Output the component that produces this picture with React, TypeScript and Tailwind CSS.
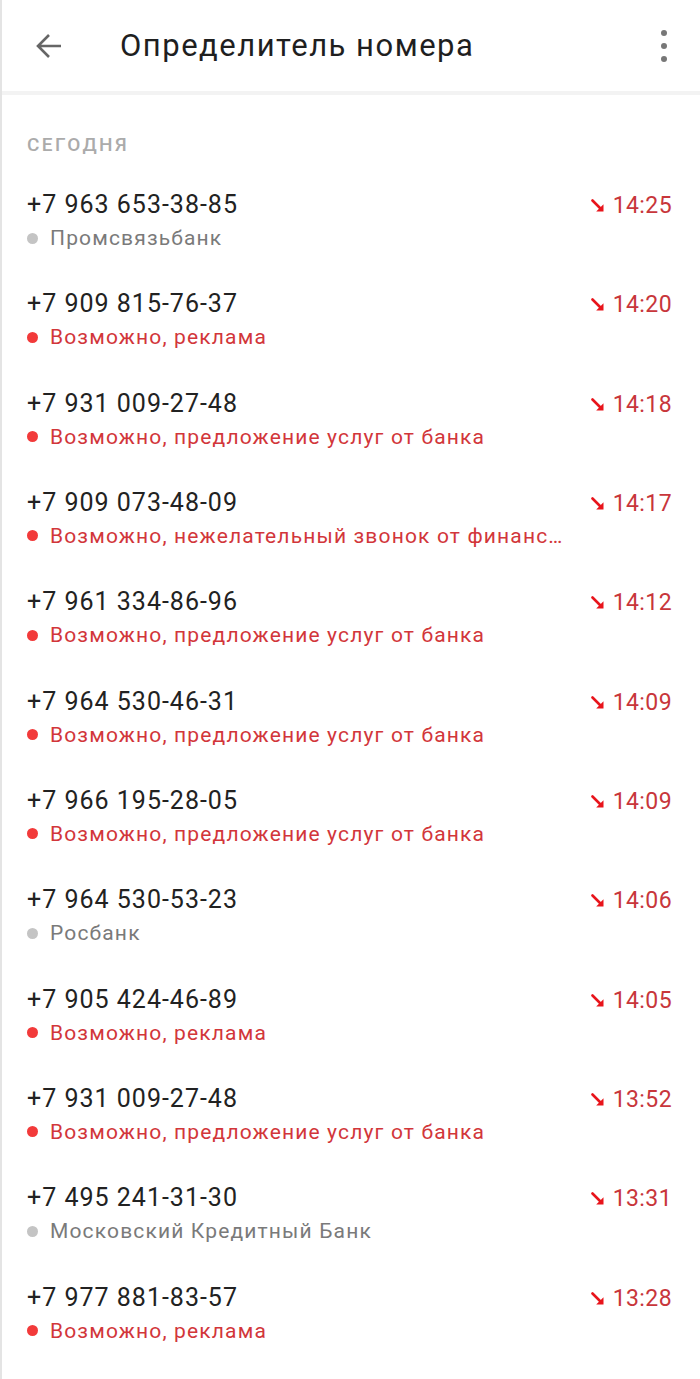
import React from "react";

type Call = {
  phone: string;
  label: string;
  spam: boolean;
  time: string;
};

const CALLS: Call[] = [
  { phone: "+7 963 653-38-85", label: "Промсвязьбанк", spam: false, time: "14:25" },
  { phone: "+7 909 815-76-37", label: "Возможно, реклама", spam: true, time: "14:20" },
  { phone: "+7 931 009-27-48", label: "Возможно, предложение услуг от банка", spam: true, time: "14:18" },
  { phone: "+7 909 073-48-09", label: "Возможно, нежелательный звонок от финансовой организации", spam: true, time: "14:17" },
  { phone: "+7 961 334-86-96", label: "Возможно, предложение услуг от банка", spam: true, time: "14:12" },
  { phone: "+7 964 530-46-31", label: "Возможно, предложение услуг от банка", spam: true, time: "14:09" },
  { phone: "+7 966 195-28-05", label: "Возможно, предложение услуг от банка", spam: true, time: "14:09" },
  { phone: "+7 964 530-53-23", label: "Росбанк", spam: false, time: "14:06" },
  { phone: "+7 905 424-46-89", label: "Возможно, реклама", spam: true, time: "14:05" },
  { phone: "+7 931 009-27-48", label: "Возможно, предложение услуг от банка", spam: true, time: "13:52" },
  { phone: "+7 495 241-31-30", label: "Московский Кредитный Банк", spam: false, time: "13:31" },
  { phone: "+7 977 881-83-57", label: "Возможно, реклама", spam: true, time: "13:28" },
];

const IncomingArrow = () => (
  <svg className="w-[14px] h-[14px] flex-shrink-0" viewBox="0 0 14 14">
    <path d="M1.5 1.5L9 9" stroke="#e8141b" strokeWidth={2.6} strokeLinecap="round" />
    <path d="M12.5 5.2V12.5H5.2z" fill="#e8141b" />
  </svg>
);

export default function App() {
  return (
    <div className="w-[700px] min-h-[1379px] bg-white border-l-2 border-[#e4e4e4] font-['Roboto',sans-serif]">
      {/* Header */}
      <div className="h-[91px] flex items-center">
        <button type="button" className="ml-[31px] w-[31px] h-[31px] flex items-center justify-center text-[#666]" aria-label="Назад">
          <svg className="w-[30px] h-[30px]" viewBox="0 0 30 30" fill="none" stroke="currentColor">
            <path d="M27 15H4M15 4L4 15l11 11" strokeWidth={2.6} strokeLinecap="butt" strokeLinejoin="miter" />
          </svg>
        </button>
        <h1 className="ml-[56px] text-[31px] leading-none text-[#1f1f1f] tracking-[1.5px]">Определитель номера</h1>
        <div className="ml-auto mr-[33px] flex flex-col gap-[7px] items-center">
          <span className="w-[6px] h-[6px] rounded-full bg-[#777]" />
          <span className="w-[6px] h-[6px] rounded-full bg-[#777]" />
          <span className="w-[6px] h-[6px] rounded-full bg-[#777]" />
        </div>
      </div>
      <div className="h-[4px] bg-[#f3f3f3]" />

      {/* Section */}
      <div className="pt-[38px] pb-[13px] pl-[25px]">
        <p className="text-[19px] leading-[24px] font-medium tracking-[2.4px] text-[#ababab]">СЕГОДНЯ</p>
      </div>

      <div>
        {CALLS.map((c, idx) => (
          <div key={idx} className="flex items-start pl-[25px] pr-[28px] pt-[19px] pb-[17.33px]">
            <div className="min-w-0 flex-1">
              <p className="text-[25px] leading-[32px] text-[#222] tracking-[1px]">{c.phone}</p>
              <div className="flex items-center gap-[12px] mt-[3px]">
                <span
                  className={
                    c.spam
                      ? "w-[11px] h-[11px] rounded-full bg-[#f23a3a] flex-shrink-0"
                      : "w-[11px] h-[11px] rounded-full bg-[#c4c4c4] flex-shrink-0"
                  }
                />
                <p
                  className={
                    c.spam
                      ? "text-[21px] leading-[28px] tracking-[1.15px] text-[#d2363a] truncate max-w-[518px]"
                      : "text-[21px] leading-[28px] tracking-[1.15px] text-[#7a7a7a] truncate max-w-[518px]"
                  }
                >
                  {c.label}
                </p>
              </div>
            </div>
            <div className="flex items-center gap-[8px] mt-[3px]">
              <IncomingArrow />
              <span className="text-[23px] leading-[28px] tracking-[0.4px] text-[#c8363b]">{c.time}</span>
            </div>
          </div>
        ))}
      </div>
    </div>
  );
}
